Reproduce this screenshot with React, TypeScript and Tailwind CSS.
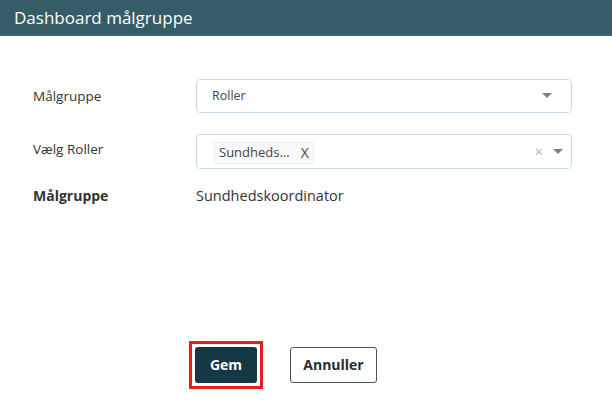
import React from 'react';

const font = { fontFamily: '"Open Sans", "Noto Sans", sans-serif' };

const Caret: React.FC = () => (
  <svg width="10" height="6" viewBox="0 0 10 6" className="shrink-0">
    <path d="M0 0 H10 L5 5 Z" fill="#808080" />
  </svg>
);

const App: React.FC = () => {
  return (
    <div className="w-[612px] h-[402px] bg-white text-[#333]" style={font}>
      <div className="h-9 bg-[#355c67] flex items-center px-[14px] border-b border-[#3e6671]">
        <h1 className="text-white text-[17px] leading-none">Dashboard målgruppe</h1>
      </div>

      <div className="pl-[33px] pt-[43px]">
        {/* Målgruppe select */}
        <div className="flex items-center h-[34px]">
          <label className="w-[163px] text-[13.5px] pt-[1px]">Målgruppe</label>
          <div className="w-[376px] h-[34px] border border-[#c6dbea] rounded-[4px] flex items-center pl-[15px] pr-[19px]">
            <span className="flex-1 text-[12.5px] text-[#444]">Roller</span>
            <Caret />
          </div>
        </div>

        {/* Roller multi select */}
        <div className="flex items-center h-[35px] mt-[21px]">
          <label className="w-[163px] text-[13.5px] pb-[5px]">Vælg Roller</label>
          <div className="w-[376px] h-[35px] border border-[#c6dbea] rounded-[4px] flex items-center pl-[17px] pr-[8px]">
            <div className="flex-1">
              <span className="inline-flex items-center h-[22px] border border-[#ececec] bg-[#fafafa] rounded-[2px] pl-[4px] pr-[4px] text-[13px] text-[#444]">
                Sundheds...
                <span className="ml-[11px] text-[14px]">X</span>
              </span>
            </div>
            <span className="text-[#b4b4b4] text-[15px] leading-none mr-[10px]">×</span>
            <Caret />
          </div>
        </div>

        {/* Current value */}
        <div className="flex items-center mt-[16px]">
          <span className="w-[163px] text-[14px] font-bold">Målgruppe</span>
          <span className="text-[14.5px]">Sundhedskoordinator</span>
        </div>

        <div className="flex items-center mt-[134px] pl-[156px]">
          <div className="border-[3px] border-[#e31e26] p-[3px]">
            <button className="w-[62px] h-[36px] bg-[#163845] text-white font-bold text-[14px] rounded-[3px]">
              Gem
            </button>
          </div>
          <button className="ml-[27px] w-[87px] h-[36px] border border-[#4a5558] rounded-[3px] text-[#1e2f36] font-bold text-[14px]">
            Annuller
          </button>
        </div>
      </div>
    </div>
  );
};

export default App;
